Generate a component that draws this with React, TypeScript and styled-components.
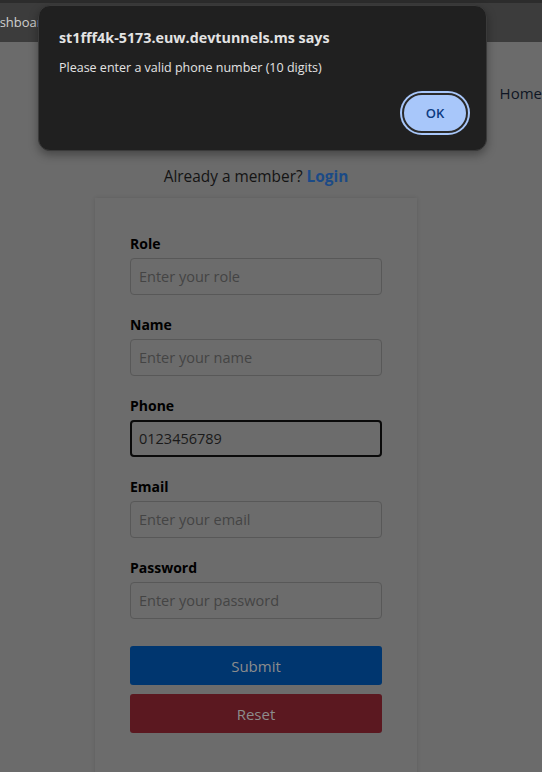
import React from "react";
import styled, { createGlobalStyle } from "styled-components";

const GlobalStyle = createGlobalStyle`
  html, body { margin: 0; padding: 0; }
  body { background: #6b6b6b; font-family: "Open Sans", "Noto Sans", sans-serif; }
  * { box-sizing: border-box; }
`;

const Page = styled.div`
  position: relative;
  width: 542px;
  height: 772px;
  overflow: hidden;
  background: #6b6b6b;
`;

const TopBar = styled.div`
  height: 42px;
  background: #3c3c3c;
  border-top: 3px solid #2c2c2c;
  display: flex;
  align-items: center;
`;

const TopLink = styled.span`
  font-family: "Open Sans", "Noto Sans", sans-serif;
  font-size: 13px;
  color: #cfcfcf;
  margin-left: -17px;
  margin-top: -2px;
`;

const NavRow = styled.div`
  display: flex;
  justify-content: flex-end;
  padding: 41px 0 0 0;
  height: 125px;
`;

const NavItem = styled.span`
  font-family: "Open Sans", sans-serif;
  font-size: 15px;
  color: #0f1624;
`;

const Center = styled.div`
  width: 512px;
  display: flex;
  flex-direction: column;
  align-items: center;
`;

const MemberLine = styled.p`
  margin: 0;
  font-size: 15.4px;
  line-height: 20px;
  color: #141414;
`;

const LoginLink = styled.a`
  color: #1b4a86;
  font-weight: 700;
  text-decoration: none;
`;

const Card = styled.form`
  margin-top: 11px;
  width: 322px;
  height: 600px;
  padding: 37px 35px 0;
  background: #6c6c6c;
  box-shadow: 0 0 4px rgba(0, 0, 0, 0.12);
  display: flex;
  flex-direction: column;
  gap: 21px;
`;

const Field = styled.div`
  display: flex;
  flex-direction: column;
  gap: 5px;
`;

const Label = styled.label`
  font-size: 14px;
  font-weight: 700;
  color: #000;
  line-height: 18px;
`;

const Input = styled.input<{ $active?: boolean }>`
  width: 252px;
  height: 37px;
  border-radius: 4px;
  border: ${(p) => (p.$active ? "2px solid #0a0a0a" : "1px solid #585858")};
  background: transparent;
  padding: 0 ${(p) => (p.$active ? 7 : 8)}px;
  font-family: "Open Sans", "Noto Sans", sans-serif;
  font-size: 14.5px;
  color: #1a1a1a;
  outline: none;
  &::placeholder { color: #444444; }
`;

const Buttons = styled.div`
  display: flex;
  flex-direction: column;
  gap: 9px;
  margin-top: 6px;
`;

const Btn = styled.button<{ $bg: string }>`
  width: 252px;
  height: 39px;
  border: none;
  border-radius: 3px;
  background: ${(p) => p.$bg};
  color: #8c8c8c;
  font-family: "Open Sans", "Noto Sans", sans-serif;
  font-size: 15px;
  font-weight: 500;
`;

const Dialog = styled.div`
  position: absolute;
  left: 38px;
  top: 5px;
  width: 449px;
  height: 146px;
  background: #202020;
  border: 1px solid #3a3a3a;
  border-radius: 12px;
  box-shadow: 0 4px 10px rgba(0, 0, 0, 0.35);
  padding: 22px 20px 0 20px;
  display: flex;
  flex-direction: column;
  font-family: "Open Sans", "Noto Sans", sans-serif;
`;

const DTitle = styled.div`
  font-size: 14.3px;
  font-weight: 700;
  color: #e3e3e3;
  line-height: 20px;
`;

const DMsg = styled.div`
  margin-top: 11px;
  font-size: 12.5px;
  color: #e3e3e3;
  line-height: 18px;
`;

const DActions = styled.div`
  display: flex;
  justify-content: flex-end;
  margin-top: 16px;
`;

const OkBtn = styled.button`
  width: 66px;
  height: 40px;
  border-radius: 20px;
  background: #a8c7fa;
  border: 2px solid #2a2a2a;
  box-shadow: 0 0 0 2px #a8c7fa;
  color: #0b3b82;
  font-family: "Open Sans", "Noto Sans", sans-serif;
  font-size: 13px;
  font-weight: 600;
  margin-right: -2px;
`;

const fields = [
  { label: "Role", placeholder: "Enter your role" },
  { label: "Name", placeholder: "Enter your name" },
  { label: "Phone", placeholder: "", value: "0123456789", active: true },
  { label: "Email", placeholder: "Enter your email" },
  { label: "Password", placeholder: "Enter your password" },
];

export default function App() {
  return (
    <Page>
      <GlobalStyle />
      <TopBar>
        <TopLink>Dashboard</TopLink>
      </TopBar>
      <NavRow>
        <NavItem>Home</NavItem>
      </NavRow>
      <Center>
        <MemberLine>
          Already a member? <LoginLink href="#">Login</LoginLink>
        </MemberLine>
        <Card onSubmit={(e) => e.preventDefault()}>
          {fields.map((f) => (
            <Field key={f.label}>
              <Label>{f.label}</Label>
              <Input
                $active={f.active}
                placeholder={f.placeholder}
                defaultValue={f.value}
              />
            </Field>
          ))}
          <Buttons>
            <Btn $bg="#00366f" type="submit">Submit</Btn>
            <Btn $bg="#5b1820" type="reset">Reset</Btn>
          </Buttons>
        </Card>
      </Center>
      <Dialog>
        <DTitle>st1fff4k-5173.euw.devtunnels.ms says</DTitle>
        <DMsg>Please enter a valid phone number (10 digits)</DMsg>
        <DActions>
          <OkBtn>OK</OkBtn>
        </DActions>
      </Dialog>
    </Page>
  );
}
